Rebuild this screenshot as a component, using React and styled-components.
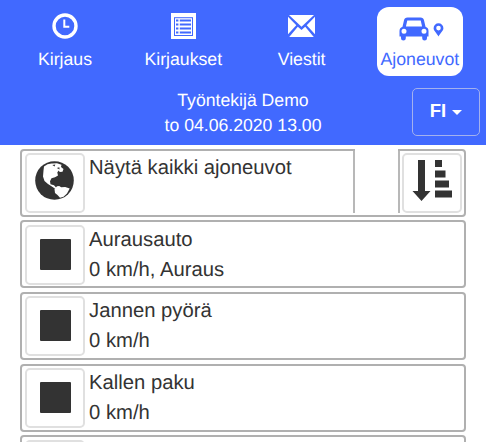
import React from 'react';
import styled, { createGlobalStyle } from 'styled-components';

const GlobalStyle = createGlobalStyle`
  * {
    box-sizing: border-box;
  }

  body {
    margin: 0;
    background: #fff;
    overflow: hidden;
    font-family: 'Liberation Sans', Arial, sans-serif;
    text-rendering: geometricPrecision;
  }

  svg {
    display: block;
  }
`;

const Page = styled.div`
  width: 486px;
  height: 442px;
  overflow: hidden;
`;

const Header = styled.header`
  height: 145px;
  background: #4169ff;
  color: #fff;
`;

const Nav = styled.nav`
  display: grid;
  grid-template-columns: repeat(4, 86px);
  column-gap: 32.3px;
  padding: 6.5px 0 0 22px;
`;

const NavItem = styled.a`
  height: 69px;
  display: flex;
  flex-direction: column;
  align-items: center;
  border-radius: 12px;
  font-size: 17.7px;
  line-height: 20px;
  white-space: nowrap;
  background: ${props => (props.$active ? '#fff' : 'transparent')};
  color: ${props => (props.$active ? '#4169ff' : '#fff')};
`;

const NavIcon = styled.span`
  height: 42.5px;
  display: flex;
  align-items: center;
  justify-content: center;
  padding: ${props => (props.$low ? '3px 0 0 3px' : '0 0 4px')};
`;

const Info = styled.div`
  display: grid;
  grid-template-columns: 1fr 160px 1fr;
  padding-top: 12.5px;
`;

const UserInfo = styled.div`
  grid-column: 2;
  text-align: center;
  font-size: 17.65px;
  line-height: 25px;
  white-space: nowrap;
`;

const Language = styled.button`
  justify-self: end;
  width: 68px;
  height: 48px;
  margin-right: 6px;
  padding: 0 0 2px;
  display: flex;
  align-items: center;
  justify-content: center;
  gap: 6px;
  border: 1.5px solid #a3b1ee;
  border-radius: 5px;
  background: transparent;
  color: #fff;
  font: bold 18.5px 'Liberation Sans', Arial, sans-serif;
`;

const Caret = styled.span`
  margin-top: 3px;
  border: 5px solid transparent;
  border-top-color: #fff;
  border-bottom: 0;
`;

const List = styled.main`
  width: 446px;
  margin-left: 20px;
  padding-top: 3.5px;
  display: flex;
  flex-direction: column;
  gap: 3.5px;
`;

const Row = styled.section`
  flex: none;
  height: 68.2px;
  display: flex;
  padding: ${props => (props.$split ? 0 : '2.5px')};
  border: 2px solid #b0b0b0;
  border-radius: 4px;
`;

const FilterCell = styled.div`
  display: flex;
  width: 332.5px;
  height: 62px;
  padding: 2.5px 2.5px 0;
  border-right: 2px solid #b8b8b8;
`;

/* breaks the top edge of the row between its two cells */
const Gap = styled.div`
  flex: 1;
  height: 64px;
  margin-top: -2px;
  background: #fff;
`;

const SortCell = styled.div`
  width: 66px;
  height: 62px;
  padding: 2.5px 2.5px 0 2px;
  border-left: 2px solid #b8b8b8;
`;

const IconButton = styled.button`
  flex: none;
  width: 60px;
  height: 60px;
  display: flex;
  align-items: center;
  justify-content: center;
  border: 2px solid #e0e0e0;
  border-radius: 5px;
  background: #fff;
  padding: ${props => props.$inset || 0};
`;

const Stop = styled.span`
  width: 31px;
  height: 31px;
  background: #333;
  border-radius: 1px;
`;

const Label = styled.div`
  padding: 0 0 0 4.5px;
  color: #333;
  font-size: 20.25px;
  line-height: 30px;
  white-space: nowrap;
`;

const ClockIcon = () => (
  <svg width="26" height="26" viewBox="0 0 26 26" fill="none" stroke="#fff">
    <circle cx="13" cy="13" r="11" strokeWidth="3.4" />
    <path d="M12.3 6.5v7.2h5" strokeWidth="2" />
  </svg>
);

const ListIcon = () => (
  <svg width="25" height="26" viewBox="0 0 25 26">
    <path fill="#fff" d="M0 0h25v26H0z" />
    <path fill="#4169ff" d="M3 4.2h19V23H3z" />
    <path fill="#fff" d="M4 5.2h17V22H4z" />
    {[6.6, 10.6, 14.6, 18.6].map(y => (
      <path key={y} fill="#4169ff" d={`M5 ${y}h2.4v2H5zM8.8 ${y}h11.2v2H8.8z`} />
    ))}
  </svg>
);

const MailIcon = () => (
  <svg width="27" height="22" viewBox="0 0 27 22" fill="#fff">
    <path d="M1 0h25L13.5 11.8zM0 1.8l8.3 8.4L0 19.2zM27 1.8v17.4l-8.3-9zM9.8 11.7l3.7 3.4 3.7-3.4 8.6 10.3H1.2z" />
  </svg>
);

const CarIcon = () => (
  <svg width="45" height="24" viewBox="0 0 45 24" fill="#4169ff">
    <path
      fillRule="evenodd"
      d="M8.500 .5h13c2 0 3 1 3.500 2.700l1.500 6.500c2 .6 3 2.200 3 4.300V19.500h-1.500v1.700a2.400 2.400 0 0 1-4.800 0V19.500H6.800v1.700a2.400 2.400 0 0 1-4.800 0V19.500H.5V14c0-2.100 1-3.700 3-4.300L5 3.200C5.500 1.500 6.500 .5 8.500 .5zM8.300 3.500L6.900 9.400h16.200l-1.400-5.900zM5 11.800a2.500 2.500 0 1 0 0 5a2.500 2.500 0 1 0 0-5zM25 11.800a2.500 2.500 0 1 0 0 5a2.500 2.500 0 1 0 0-5z"
    />
    <path
      fillRule="evenodd"
      d="M39.500 6.300a4.900 4.900 0 0 1 4.900 4.900c0 2.600-3.100 4.800-4.900 8.300c-1.800-3.500-4.900-5.700-4.900-8.300a4.900 4.900 0 0 1 4.900-4.900zm0 2.500a2.300 2.300 0 1 0 0 4.600a2.300 2.300 0 1 0 0-4.600z"
    />
  </svg>
);

const GlobeIcon = () => (
  <svg width="39" height="39" viewBox="0 0 39 39">
    <circle cx="19.5" cy="19.5" r="19.3" fill="#333" />
    <path
      fill="#fff"
      d="M9 5.500Q12.500 2.300 17 2.500l5-.3 4.500 1.500-.5 2.300 2.500 2-1 2.800-2.700.2-1.200-1.500-1.300 2 .7 3-3 1.700-3.500 1-1.500 3 .5 3 3.500 1 2.500 2.800-1.300.8-3.700-2.500-3.500-2.300-3.500-3-1.500-4.500.5-6z"
    />
    <path
      fill="#fff"
      d="M19.500 28l2.500-2.700 2.200-.3 2 1.300 4-.2 4.500 1.500-2.700 5-3.500 3.200-3.500 1-2.500-2.800-2.500-2z"
    />
    <path fill="#333" d="M17.300 4l3-.5-.7 2.100zM21.800 7l2.500-.8.3 2.300z" />
  </svg>
);

const SortIcon = () => (
  <svg width="40" height="42" viewBox="0 0 40 42" fill="#333">
    <path d="M6 0h7v31h5.500L9.500 41 .5 31H6zM23 0h7v7h-7zM23 10.500h10.500v7H23zM23 20.500h14v7H23zM23 30.500h17v7H23z" />
  </svg>
);

const vehicles = [
  { name: 'Aurausauto', status: '0 km/h, Auraus' },
  { name: 'Jannen pyörä', status: '0 km/h' },
  { name: 'Kallen paku', status: '0 km/h' },
  { name: '', status: '' },
];

function App() {
  return (
    <Page>
      <GlobalStyle />
      <Header>
        <Nav>
          <NavItem><NavIcon><ClockIcon /></NavIcon>Kirjaus</NavItem>
          <NavItem><NavIcon><ListIcon /></NavIcon>Kirjaukset</NavItem>
          <NavItem><NavIcon><MailIcon /></NavIcon>Viestit</NavItem>
          <NavItem $active><NavIcon $low><CarIcon /></NavIcon>Ajoneuvot</NavItem>
        </Nav>
        <Info>
          <UserInfo>
            Työntekijä Demo<br />
            to 04.06.2020 13.00
          </UserInfo>
          <Language>FI<Caret /></Language>
        </Info>
      </Header>
      <List>
        <Row $split>
          <FilterCell>
            <IconButton $inset="0 1px 5px 0"><GlobeIcon /></IconButton>
            <Label>Näytä kaikki ajoneuvot</Label>
          </FilterCell>
          <Gap />
          <SortCell>
            <IconButton $inset="0 0 4px"><SortIcon /></IconButton>
          </SortCell>
        </Row>
        {vehicles.map((vehicle, i) => (
          <Row key={i}>
            <IconButton $inset="0 0 1px 2px"><Stop /></IconButton>
            <Label>
              {vehicle.name}<br />
              {vehicle.status}
            </Label>
          </Row>
        ))}
      </List>
    </Page>
  );
}

export default App;
